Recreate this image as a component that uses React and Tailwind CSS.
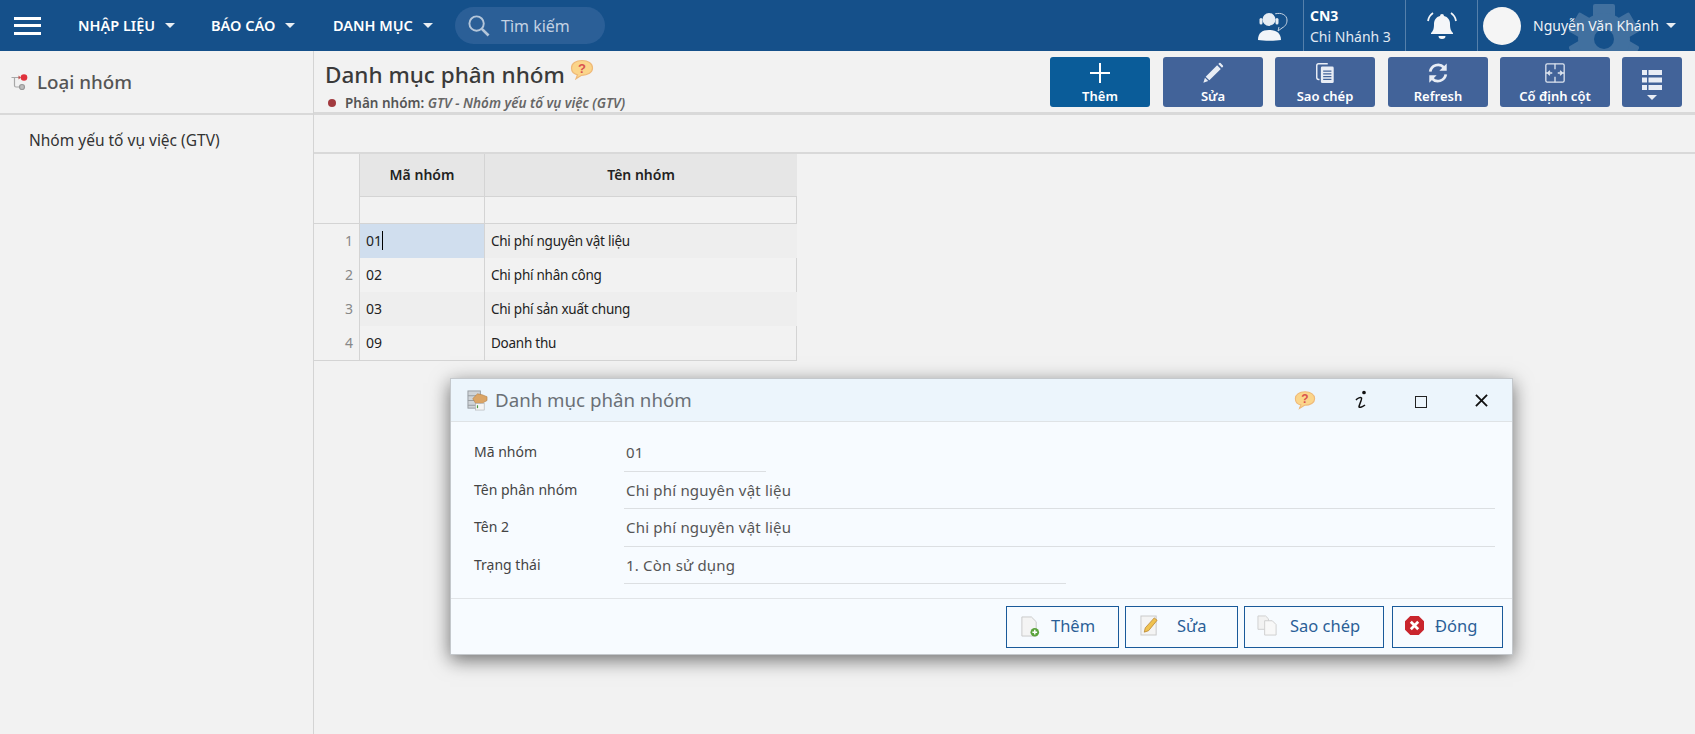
import React from 'react';

const HelpBubble = ({ className }) => (
    <svg viewBox="0 0 24 21" className={className}>
        <path d="M12 1.500C6 1.500 1.500 4.500 1.500 9c0 3.500 2.500 6 6 6.800l-1.500 4 5.500-3.500c6.500 0 11-3 11-7.300C22.500 4.500 18 1.500 12 1.500z" fill="#fbd58a" stroke="#efb978" strokeWidth="1.200" />
        <text x="12" y="14" textAnchor="middle" fontSize="13" fontWeight="700" fill="#d9534f" fontFamily="Liberation Sans, sans-serif">?</text>
    </svg>
);

const Caret = ({ className = 'border-t-white/90' }) => (
    <span className={`inline-block w-0 h-0 border-x-[5px] border-x-transparent border-t-[5px] ${className}`} />
);

const Menu = ({ label, width }) => (
    <div className={`flex items-center gap-[10px] ${width}`}>
        <span className="text-white text-[14.5px] font-semibold whitespace-nowrap">{label}</span>
        <Caret />
    </div>
);

const AddIcon = () => (
    <svg viewBox="0 0 24 24" className="w-[24px] h-[24px]" fill="none" stroke="#fff" strokeWidth="2">
        <path d="M12 2v20M2 12h20" />
    </svg>
);

const PencilIcon = () => (
    <svg viewBox="0 0 24 24" className="w-[22px] h-[22px]" fill="#e8edf5">
        <path d="M16.500 3.500l4 4L8 20l-4-4zM3.200 17.200l3.600 3.600L1.500 22.500zM17.800 2.200l1-1a1 1 0 0 1 1.400 0l2.600 2.600a1 1 0 0 1 0 1.400l-1 1z" />
    </svg>
);

const CopyIcon = () => (
    <svg viewBox="0 0 24 24" className="w-[22px] h-[22px]" fill="none" stroke="#e8edf5" strokeWidth="1.600">
        <path d="M6 19H5a2 2 0 0 1-2-2V4a2 2 0 0 1 2-2h10" />
        <rect x="7.500" y="5" width="14" height="18" rx="1.500" fill="#e8edf5" stroke="none" />
        <path d="M10 10h9M10 13h9M10 16h9M10 19h9" stroke="#426399" strokeWidth="1.200" />
    </svg>
);

const RefreshIcon = () => (
    <svg viewBox="0 0 24 24" className="w-[22px] h-[22px]" fill="none" stroke="#e8edf5" strokeWidth="3">
        <path d="M3.500 10.500A8.700 8.700 0 0 1 18.500 6" />
        <path d="M20.500 13.500A8.700 8.700 0 0 1 5.500 18" />
        <path d="M21.500 1.500v8h-8zM2.500 22.500v-8h8z" fill="#e8edf5" stroke="none" />
    </svg>
);

const FreezeIcon = () => (
    <svg viewBox="0 0 24 24" className="w-[22px] h-[22px]" fill="none" stroke="#dfe6f0" strokeWidth="1.400">
        <rect x="2" y="2" width="20" height="20" rx="1.500" />
        <path d="M12 2v6M12 16v6M2 12h7M6.500 9.500L4 12l2.500 2.500M22 12h-7M17.500 9.500L20 12l-2.500 2.500" />
    </svg>
);

const ListIcon = () => (
    <svg viewBox="0 0 20 20" className="w-[20px] h-[20px]" fill="#e8edf5">
        <path d="M0 0h5v5H0zM6.500 0H20v5H6.500zM0 7.500h5v5H0zM6.500 7.500H20v5H6.500zM0 15h5v5H0zM6.500 15H20v5H6.500z" />
    </svg>
);

const Tool = ({ icon, label, width, active }) => (
    <button className={`${width} h-[50px] rounded-[3px] flex flex-col items-center justify-between pt-[4px] pb-[2px] text-white text-[13px] font-semibold leading-[18px] ${active ? 'bg-[#0a5c99]' : 'bg-[#426399]'}`}>
        <span className="h-[24px] flex items-center">{icon}</span>
        <span className="whitespace-nowrap">{label}</span>
    </button>
);

const Field = ({ label, value, lineWidth }) => (
    <div className="h-[37.500px] flex">
        <div className="w-[150px] pt-[7px] text-[14px] text-[#444]">{label}</div>
        <div className={`${lineWidth} border-b border-[#dcdfe2] pl-[2px] pt-[7px] text-[15px] text-[#555] tracking-[0.2px]`}>{value}</div>
    </div>
);

const DialogButton = ({ icon, label, width, gap }) => (
    <button className={`${width} h-[42px] border border-[#1a5a9a] flex items-center ${gap} text-[#2b5f97] text-[16.500px]`}>
        {icon}
        <span className="whitespace-nowrap">{label}</span>
    </button>
);

const rows = [
    { no: 1, code: '01', name: 'Chi phí nguyên vật liệu' },
    { no: 2, code: '02', name: 'Chi phí nhân công' },
    { no: 3, code: '03', name: 'Chi phí sản xuất chung' },
    { no: 4, code: '09', name: 'Doanh thu' },
];

export default function App() {
    return (
        <div className="w-[1695px] h-[734px] relative overflow-hidden bg-[#f2f2f2] text-[#333] font-['Noto_Sans','Open_Sans',sans-serif]">
            {/* Thanh trên cùng */}
            <header className="h-[51px] bg-[#15508a] flex items-center relative overflow-hidden">
                <div className="ml-[14px] w-[27px] h-[18px] flex flex-col justify-between">
                    <span className="h-[3px] bg-white" />
                    <span className="h-[3px] bg-white" />
                    <span className="h-[3px] bg-white" />
                </div>
                <div className="ml-[37px] flex">
                    <Menu label="NHẬP LIỆU" width="w-[133px]" />
                    <Menu label="BÁO CÁO" width="w-[122px]" />
                    <Menu label="DANH MỤC" width="w-[122px]" />
                </div>
                <div className="w-[150px] h-[37px] rounded-full bg-[#2b5f97] flex items-center pl-[12px] gap-[11px] text-[#c3d2e3] text-[16px]">
                    <svg viewBox="0 0 24 24" className="w-[23px] h-[23px]" fill="none" stroke="#b4c6da" strokeWidth="2">
                        <circle cx="10" cy="10" r="7.500" />
                        <path d="M15.500 15.500l7 7" strokeWidth="2.800" />
                    </svg>
                    <span>Tìm kiếm</span>
                </div>

                <div className="ml-auto flex items-center h-full">
                    <svg viewBox="0 0 30 30" className="w-[30px] h-[30px] mr-[15px]">
                        <path d="M17 3c6-2 12 1 12 6 0 3-1 6-5 8l-4 3 1-4" fill="none" stroke="#c6d4e4" strokeWidth="1" />
                        <circle cx="11" cy="8.500" r="6.500" fill="#e6ecf3" />
                        <path d="M0 29c0-7 4-10 11-10s12 3 12 10c-6 1-17 1-23 0z" fill="#f2f5f9" />
                        <path d="M3.500 10V7.500a7.500 7 0 0 1 15 0V10c0 3-3 4.500-6 4.500" fill="none" stroke="#15508a" strokeWidth="1" />
                        <rect x="1.500" y="7" width="3" height="6.500" rx="1.500" fill="#e6ecf3" />
                        <rect x="17.500" y="7" width="3" height="6.500" rx="1.500" fill="#e6ecf3" />
                    </svg>
                    <div className="w-[102px] h-full border-l border-[#5580ab] pl-[6px] text-white flex flex-col justify-center">
                        <span className="text-[14px] font-bold leading-[21px]">CN3</span>
                        <span className="text-[14px] leading-[21px] text-[#e3eaf2]">Chi Nhánh 3</span>
                    </div>
                    <div className="w-[72px] h-full border-l border-[#5580ab] flex items-center justify-center">
                        <svg viewBox="0 0 32 32" className="w-[32px] h-[32px]" fill="#f4f6f9">
                            <path d="M16 4a2 2 0 0 1 2 2c4 1 6 4 6 8 0 5 1 7 3 9v1H5v-1c2-2 3-4 3-9 0-4 2-7 6-8a2 2 0 0 1 2-2z" />
                            <path d="M12.500 26h7a3.500 3 0 0 1-7 0z" />
                            <path d="M7 3C4 5 2.500 8 2 11M25 3c3 2 4.500 5 5 8" fill="none" stroke="#f4f6f9" strokeWidth="1.800" />
                        </svg>
                    </div>
                    <div className="w-[218px] h-full border-l border-[#5580ab] flex items-center pl-[5px] relative">
                        <svg viewBox="0 0 70 70" className="absolute left-[91px] top-[4px] w-[70px] h-[70px]" fill="#41709f">
                            <rect x="24" y="0" width="22" height="70" rx="2" />
                            <rect x="24" y="0" width="22" height="70" rx="2" transform="rotate(60 35 35)" />
                            <rect x="24" y="0" width="22" height="70" rx="2" transform="rotate(120 35 35)" />
                            <circle cx="35" cy="35" r="26" />
                            <circle cx="35" cy="35" r="10" fill="#15508a" />
                        </svg>
                        <span className="w-[38px] h-[38px] rounded-full bg-[#f5f5f5] relative" />
                        <span className="ml-[12px] text-[14px] text-[#f0f3f7] whitespace-nowrap relative">Nguyễn Văn Khánh</span>
                        <span className="ml-[7px] relative flex"><Caret /></span>
                    </div>
                </div>
            </header>

            <div className="flex h-[683px]">
                {/* Cột trái */}
                <aside className="w-[314px] shrink-0 border-r border-[#d4d4d4]">
                    <div className="h-[64px] border-b-2 border-[#d9d9d9] flex items-center pl-[11px] gap-[9px]">
                        <svg viewBox="0 0 17 17" className="w-[17px] h-[17px]" fill="none" stroke="#a8a8a8" strokeWidth="1.200">
                            <path d="M0.500 3.500h8M3.500 3.500v8a1.500 1.500 0 0 0 1.500 1.500h3" />
                            <path d="M7.500 1.500l2.500 2-2.500 2z" fill="#c0504d" stroke="none" />
                            <circle cx="11" cy="13" r="2.500" fill="#bdbdbd" stroke="#999" />
                            <circle cx="13" cy="3.500" r="3.300" fill="#e0313c" stroke="none" />
                        </svg>
                        <span className="text-[18.800px] font-medium text-[#555]">Loại nhóm</span>
                    </div>
                    <div className="pl-[29px] pt-[15px] text-[15.500px] leading-[20px] text-[#333]">Nhóm yếu tố vụ việc (GTV)</div>
                </aside>

                {/* Nội dung */}
                <main className="flex-1 min-w-0">
                    <div className="h-[64px] border-b-[3px] border-[#d9d9d9] flex items-start">
                        <div className="pl-[11px] w-[730px]">
                            <div className="flex items-start h-[37px]">
                                <h1 className="text-[22.500px] leading-[34px] mt-[7px] font-medium text-[#3a3a3a] whitespace-nowrap">Danh mục phân nhóm</h1>
                                <HelpBubble className="w-[24px] h-[21px] ml-[5px] mt-[8px]" />
                            </div>
                            <div className="flex items-center mt-[7px] text-[13.500px] font-semibold text-[#555] whitespace-nowrap leading-[16px]">
                                <span className="w-[8px] h-[8px] rounded-full bg-[#a23a3f] ml-[3px] mr-[9px]" />
                                Phân nhóm:&nbsp;<i className="text-[#666]">GTV - Nhóm yếu tố vụ việc (GTV)</i>
                            </div>
                        </div>
                        <div className="ml-auto pt-[6px] pr-[13px] flex gap-[12px]">
                            <Tool active icon={<AddIcon />} label="Thêm" width="w-[100px]" />
                            <Tool icon={<PencilIcon />} label="Sửa" width="w-[100px] ml-[1px]" />
                            <Tool icon={<CopyIcon />} label="Sao chép" width="w-[100px]" />
                            <Tool icon={<RefreshIcon />} label="Refresh" width="w-[100px] ml-[1px]" />
                            <Tool icon={<FreezeIcon />} label="Cố định cột" width="w-[110px]" />
                            <button className="w-[60px] h-[50px] rounded-[3px] bg-[#426399] flex flex-col items-center justify-center gap-[5px] pt-[6px]">
                                <ListIcon />
                                <Caret className="border-t-[#e8edf5]" />
                            </button>
                        </div>
                    </div>

                    <div className="h-[37px]" />

                    {/* Bảng dữ liệu */}
                    <div className="border-t-2 border-[#d9d9d9]">
                        <div className="w-[483px] grid grid-cols-[46px_125px_312px] border-r border-b border-[#d4d4d4] text-[14px] text-[#222]">
                            <div className="h-[43px] border-r border-[#d4d4d4]" />
                            <div className="h-[43px] bg-[#e6e6e6] border-r border-b border-[#d4d4d4] flex items-center justify-center font-semibold pb-[2px]">Mã nhóm</div>
                            <div className="h-[43px] bg-[#e6e6e6] border-b border-[#d4d4d4] flex items-center justify-center font-semibold pb-[2px]">Tên nhóm</div>

                            <div className="h-[27px] border-r border-b border-[#d4d4d4]" />
                            <div className="h-[27px] border-r border-b border-[#d4d4d4]" />
                            <div className="h-[27px] border-b border-[#d4d4d4]" />

                            {rows.map((row, i) => (
                                <React.Fragment key={row.no}>
                                    <div className="h-[34px] border-r border-[#d4d4d4] flex items-center justify-end pr-[6px] pb-[1px] text-[#888]">{row.no}</div>
                                    <div className={`h-[34px] border-r border-[#d4d4d4] flex items-center pl-[6px] pb-[1px] text-[14px] ${i === 0 ? 'bg-[#d0deee]' : i % 2 === 0 ? 'bg-[#eeeeee]' : ''}`}>
                                        {row.code}
                                        {i === 0 && <span className="w-px h-[19px] bg-black" />}
                                    </div>
                                    <div className={`h-[34px] flex items-center pl-[6px] text-[13.500px] tracking-[-0.25px] ${i % 2 === 0 ? 'bg-[#eeeeee]' : ''}`}>{row.name}</div>
                                </React.Fragment>
                            ))}
                        </div>
                    </div>
                </main>
            </div>

            {/* Hộp thoại */}
            <div className="absolute left-[450px] top-[378px] w-[1063px] h-[277px] bg-[#f7fbff] border border-[#c4c8cc] shadow-[0_5px_18px_rgba(0,0,0,0.55)] flex flex-col">
                <div className="h-[43px] shrink-0 bg-[#ecf5fc] border-b border-[#dfe3e6] flex items-center pl-[16px]">
                    <svg viewBox="0 0 22 22" className="w-[21px] h-[21px]">
                        <rect x="1" y="1" width="13" height="18" fill="#cfd4d8" stroke="#969ca1" />
                        <path d="M1 6h13M1 11h13M1 16h13" stroke="#969ca1" />
                        <path d="M6 9l5-5 5 1 5 2v4l-5 3H9z" fill="#dba566" stroke="#a87338" strokeWidth="0.500" />
                        <rect x="9" y="14" width="9" height="7" fill="#f5f5f5" stroke="#aaa" strokeWidth="0.600" />
                        <path d="M11 16v3" stroke="#4a9a3c" strokeWidth="1.200" />
                    </svg>
                    <span className="ml-[7px] text-[18.700px] text-[#6a7076]">Danh mục phân nhóm</span>
                    <div className="ml-auto flex items-center text-[#111]">
                        <HelpBubble className="w-[22px] h-[20px]" />
                        <svg viewBox="0 0 14 20" className="w-[14px] h-[20px] ml-[38px]" fill="none" stroke="#111" strokeWidth="1.500">
                            <path d="M2 10c1.500-2 4.500-3 5.500-2 .7 1-2 6-2.500 8.500-.2 1.500 3 1 6-1.500" />
                            <circle cx="10" cy="2.500" r="1.100" fill="#111" />
                        </svg>
                        <span className="w-[12px] h-[12px] border-[1.500px] border-[#222] mt-[3px] ml-[47px]" />
                        <svg viewBox="0 0 14 14" className="w-[13px] h-[13px] ml-[48px] mr-[24px]" fill="none" stroke="#111" strokeWidth="2">
                            <path d="M1 1l12 12M13 1L1 13" />
                        </svg>
                    </div>
                </div>
                <div className="pl-[23px] pr-[17px] pt-[12px] flex-1">
                    <Field label="Mã nhóm" value="01" lineWidth="w-[142px]" />
                    <Field label="Tên phân nhóm" value="Chi phí nguyên vật liệu" lineWidth="flex-1" />
                    <Field label="Tên 2" value="Chi phí nguyên vật liệu" lineWidth="flex-1" />
                    <Field label="Trạng thái" value="1. Còn sử dụng" lineWidth="w-[442px]" />
                </div>
                <div className="h-[56px] shrink-0 border-t border-[#e1e4e7] flex items-center pl-[555px]">
                    <DialogButton label="Thêm" width="w-[113px]" gap="pl-[13px] gap-[11px]" icon={
                        <svg viewBox="0 0 20 22" className="w-[20px] h-[21px]">
                            <path d="M1.500 1h10l5 5v15h-15z" fill="#f4f4f4" stroke="#c8c8c8" />
                            <circle cx="15" cy="17" r="4.500" fill="#5ba33c" />
                            <path d="M15 14.500v5M12.500 17h5" stroke="#fff" strokeWidth="1.500" />
                        </svg>
                    } />
                    <DialogButton label="Sửa" width="w-[113px] ml-[6px]" gap="pl-[14px] gap-[18px]" icon={
                        <svg viewBox="0 0 20 22" className="w-[19px] h-[21px] -mt-[2px]">
                            <rect x="1" y="1" width="16" height="20" fill="#f4f4f4" stroke="#c8c8c8" />
                            <path d="M15 3l3 2.500-9 11-4.500 1.500 1-4.500z" fill="#f0c24f" stroke="#b5812c" strokeWidth="0.800" />
                        </svg>
                    } />
                    <DialogButton label="Sao chép" width="w-[140px] ml-[6px]" gap="pl-[12px] gap-[12px]" icon={
                        <svg viewBox="0 0 22 22" className="w-[21px] h-[21px] -mt-[2px]">
                            <path d="M1 1h8l3 3v11H1z" fill="#f2f2f2" stroke="#cfcfcf" />
                            <path d="M8 6h8l4 4v11H8z" fill="#f8f8f8" stroke="#cfcfcf" />
                        </svg>
                    } />
                    <DialogButton label="Đóng" width="w-[111px] ml-[8px]" gap="pl-[12px] gap-[11px]" icon={
                        <svg viewBox="0 0 18 18" className="w-[19px] h-[19px] -mt-[2px]">
                            <path d="M5 0h8l5 5v8l-5 5H5l-5-5V5z" fill="#c9252d" />
                            <path d="M5.500 5.500l7 7M12.500 5.500l-7 7" stroke="#fff" strokeWidth="2.600" />
                        </svg>
                    } />
                </div>
            </div>
        </div>
    );
}
